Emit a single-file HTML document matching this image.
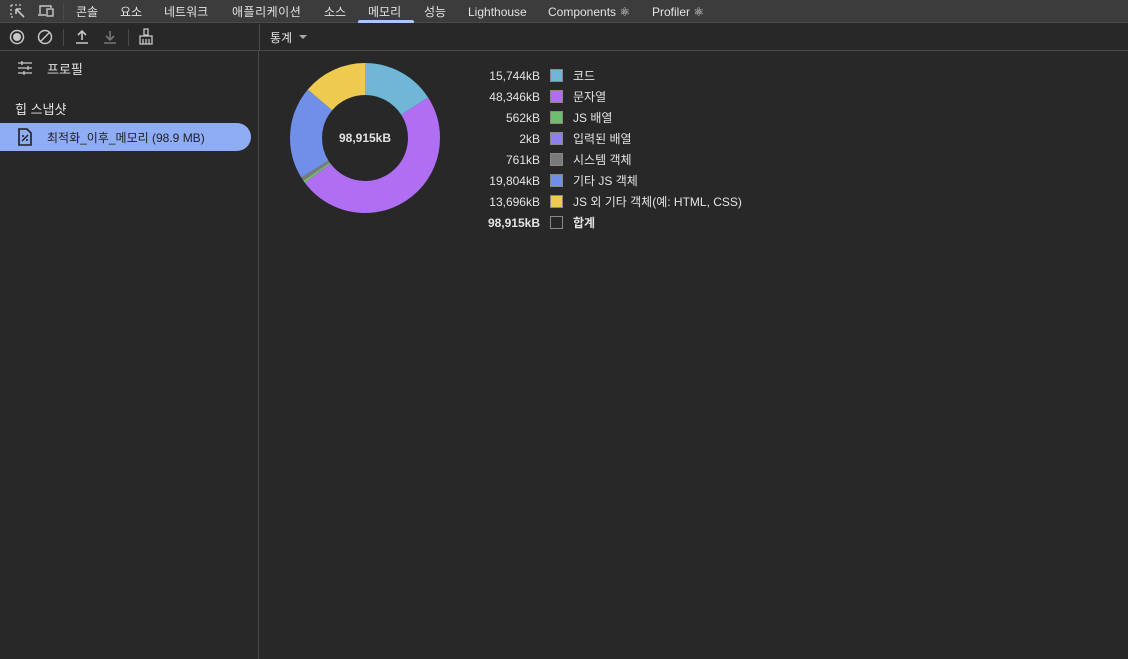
<!DOCTYPE html>
<html><head><meta charset="utf-8"><style>
*{margin:0;padding:0;box-sizing:border-box}
body{width:1128px;height:659px;background:#282828;font-family:"Liberation Sans","Noto Sans CJK KR",sans-serif;font-size:12px;line-height:14px;color:#e3e3e3;position:relative;overflow:hidden}
span{line-height:14px}
.top{position:absolute;left:0;top:0;width:1128px;height:23px;background:#3c3c3c;border-bottom:1px solid #4a4a4a}
.tab{position:absolute;top:5px;font-size:12px;color:#e3e3e3;white-space:nowrap}
.sel{position:absolute;left:358px;top:20px;width:56px;height:3px;background:#a8c7fa;border-radius:2px 2px 0 0}
.tb{position:absolute;left:0;top:24px;width:1128px;height:27px;border-bottom:1px solid #4a4a4a}
.vl{position:absolute;background:#4a4a4a;width:1px}
.side{position:absolute;left:0;top:51px;width:259px;height:608px;border-right:1px solid #4a4a4a}
.leg{position:absolute;left:470px;top:67px}
.row{height:21px;position:relative;width:300px}
.row .n{position:absolute;right:230px;top:2px;text-align:right;white-space:nowrap}
.row .b{position:absolute;left:80px;top:2px;width:13px;height:13px;border:1px solid #888}
.row .l{position:absolute;left:103px;top:2px;white-space:nowrap}
</style></head><body>
<div class="top">
<svg style="position:absolute;left:10px;top:4px" width="16" height="15" viewBox="0 0 16 15"><path d="M1 1h2M5 1h2M9 1h2M1 1v2M1 5v2M1 9v2M1 13h2" stroke="#c7c7c7" stroke-width="1.3" fill="none"/><path d="M6 5l8 8M6 5h5M6 5v5" stroke="#c7c7c7" stroke-width="1.6" fill="none"/></svg>
<svg style="position:absolute;left:37px;top:4px" width="18" height="14" viewBox="0 0 18 14"><path d="M3 10V2h11v2M1 11h8" stroke="#c7c7c7" stroke-width="1.4" fill="none"/><rect x="10" y="5" width="6" height="7" stroke="#c7c7c7" stroke-width="1.4" fill="none"/></svg>
<div class="vl" style="left:63px;top:3px;height:17px"></div>
<span class="tab" style="left:76px">콘솔</span>
<span class="tab" style="left:120px">요소</span>
<span class="tab" style="left:164px">네트워크</span>
<span class="tab" style="left:232px;letter-spacing:0.5px">애플리케이션</span>
<span class="tab" style="left:324px">소스</span>
<span class="tab" style="left:368px">메모리</span>
<span class="tab" style="left:424px">성능</span>
<span class="tab" style="left:468px">Lighthouse</span>
<span class="tab" style="left:548px">Components ⚛</span>
<span class="tab" style="left:652px">Profiler ⚛</span>
<div class="sel"></div>
</div>
<div class="tb">
<svg style="position:absolute;left:9px;top:5px" width="16" height="16"><circle cx="8" cy="8" r="6.5" stroke="#c7c7c7" stroke-width="1.5" fill="none"/><circle cx="8" cy="8" r="4" fill="#c7c7c7"/></svg>
<svg style="position:absolute;left:37px;top:5px" width="16" height="16"><circle cx="8" cy="8" r="6.5" stroke="#c7c7c7" stroke-width="1.5" fill="none"/><path d="M3.5 12.5l9-9" stroke="#c7c7c7" stroke-width="1.5"/></svg>
<div class="vl" style="left:63px;top:5px;height:17px"></div>
<svg style="position:absolute;left:74px;top:5px" width="16" height="16"><path d="M8 11V2M4 6l4-4 4 4M2 14h12" stroke="#c7c7c7" stroke-width="1.6" fill="none"/></svg>
<svg style="position:absolute;left:102px;top:5px" width="16" height="16"><path d="M8 2v9M4 7l4 4 4-4M2 14h12" stroke="#777" stroke-width="1.6" fill="none"/></svg>
<div class="vl" style="left:128px;top:5px;height:17px"></div>
<svg style="position:absolute;left:138px;top:4px" width="16" height="18"><path d="M6 1h4v6H6zM2 8h12v8H2zM5 11v5M8 11v5M11 11v5" stroke="#c7c7c7" stroke-width="1.3" fill="none"/></svg>
<div class="vl" style="left:259px;top:0;height:27px"></div>
<span style="position:absolute;left:270px;top:7px">통계</span>
<svg style="position:absolute;left:299px;top:11px" width="8" height="5"><path d="M0 0h8L4 4z" fill="#aaa"/></svg>
</div>
<div class="side">
<svg style="position:absolute;left:17px;top:10px" width="16" height="14"><path d="M1 2h14M1 7h14M1 12h14M5 0v4M11 5v4M7 10v4" stroke="#c7c7c7" stroke-width="1.3"/></svg>
<span style="position:absolute;left:47px;top:12px;font-size:13px">프로필</span>
<span style="position:absolute;left:15px;top:52px;font-size:13px">힙 스냅샷</span>
<div style="position:absolute;left:0;top:72px;width:251px;height:28px;background:#8fadf5;border-radius:0 14px 14px 0"></div>
<svg style="position:absolute;left:18px;top:77px" width="14" height="18"><path d="M1 1h8l4 4v12H1z" stroke="#1f1f1f" stroke-width="1.6" fill="none"/><path d="M4 13l6-6" stroke="#1f1f1f" stroke-width="1.4"/><circle cx="5" cy="8" r="1" fill="#1f1f1f"/><circle cx="9" cy="12" r="1" fill="#1f1f1f"/></svg>
<span style="position:absolute;left:47px;top:80px;color:#1f1f1f">최적화_이후_메모리 (98.9 MB)</span>
</div>
<svg style="position:absolute;left:290px;top:63px" width="150" height="150" viewBox="0 0 150 150">
<g transform="rotate(-90 75 75)" fill="none" stroke-width="32">
<circle cx="75" cy="75" r="59" stroke="#6fb6d7" stroke-dasharray="59 400" stroke-dashoffset="0"/>
<circle cx="75" cy="75" r="59" stroke="#b06ff2" stroke-dasharray="181.2 400" stroke-dashoffset="-59"/>
<circle cx="75" cy="75" r="59" stroke="#6fbd6f" stroke-dasharray="2.1 400" stroke-dashoffset="-240.2"/>
<circle cx="75" cy="75" r="59" stroke="#7a7a7a" stroke-dasharray="2.9 400" stroke-dashoffset="-242.3"/>
<circle cx="75" cy="75" r="59" stroke="#6f8fe8" stroke-dasharray="74.2 400" stroke-dashoffset="-245.2"/>
<circle cx="75" cy="75" r="59" stroke="#eecb4e" stroke-dasharray="51.4 400" stroke-dashoffset="-319.4"/>
</g>
<text x="75" y="79" text-anchor="middle" fill="#e3e3e3" font-size="12" font-weight="bold" font-family="Liberation Sans,sans-serif">98,915kB</text>
</svg>
<div class="leg">
<div class="row"><span class="n">15,744kB</span><span class="b" style="background:#6fb6d7"></span><span class="l">코드</span></div>
<div class="row"><span class="n">48,346kB</span><span class="b" style="background:#b06ff2"></span><span class="l">문자열</span></div>
<div class="row"><span class="n">562kB</span><span class="b" style="background:#6fbd6f"></span><span class="l">JS 배열</span></div>
<div class="row"><span class="n">2kB</span><span class="b" style="background:#8c7ff0"></span><span class="l">입력된 배열</span></div>
<div class="row"><span class="n">761kB</span><span class="b" style="background:#7a7a7a"></span><span class="l">시스템 객체</span></div>
<div class="row"><span class="n">19,804kB</span><span class="b" style="background:#6f8fe8"></span><span class="l">기타 JS 객체</span></div>
<div class="row"><span class="n">13,696kB</span><span class="b" style="background:#eecb4e"></span><span class="l">JS 외 기타 객체(예: HTML, CSS)</span></div>
<div class="row" style="font-weight:bold"><span class="n">98,915kB</span><span class="b" style="background:transparent"></span><span class="l">합계</span></div>
</div>
</body></html>
